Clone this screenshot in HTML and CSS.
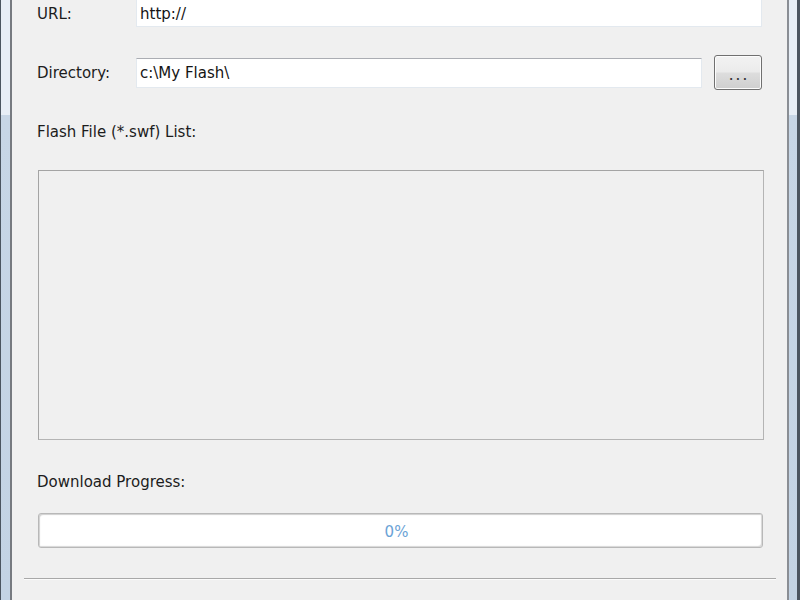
FILE: index.html
```html
<!DOCTYPE html>
<html>
<head>
    <meta charset="utf-8">
    <title>Flash Downloader</title>
    <link rel="stylesheet" href="styles.css">
</head>
<body>
    <div class="window">
        <div class="frame frame-left"></div>

        <div class="client">
            <div class="row row-url">
                <label class="label">URL:</label>
                <div class="field field-url">http://</div>
            </div>

            <div class="row row-dir">
                <label class="label">Directory:</label>
                <div class="field field-dir">c:\My Flash\</div>
                <button class="browse">...</button>
            </div>

            <div class="caption caption-list">Flash File (*.swf) List:</div>
            <div class="listbox"></div>

            <div class="caption caption-progress">Download Progress:</div>
            <div class="progress"><span class="progress-text">0%</span></div>

            <div class="separator"></div>
        </div>

        <div class="frame frame-right"></div>
    </div>
</body>
</html>
```

FILE: styles.css
```css
body {
    margin: 0;
    background: #f0f0f0;
    font-family: "DejaVu Sans", Verdana, sans-serif;
    font-size: 15px;
    color: #1c1c1c;
}
.window {
    display: flex;
    height: 600px;
    overflow: hidden;
}

/* window frame */
.frame {
    background: linear-gradient(to bottom, #e7eef6 0, #e7eef6 115px, #c7d6e6 115px, #c3d3e4 100%);
}
.frame-left {
    width: 9px;
    border-left: 1px solid #4b5560;
    border-right: 2px solid #767a80;
}
.frame-right {
    width: 8px;
    border-left: 2px solid #8a8e94;
    border-right: 3px solid #4b5560;
}

.client {
    flex: 1;
    padding: 0 25px;
    background: #f0f0f0;
}

/* rows */
.row {
    display: flex;
    align-items: center;
}
.label {
    width: 99px;
    flex: none;
    line-height: 18px;
}
.field {
    flex: 1;
    box-sizing: border-box;
    background: #fff;
    padding-left: 3px;
    line-height: 18px;
    display: flex;
    align-items: center;
    color: #141414;
}
.row-url {
    height: 27px;
}
.field-url {
    height: 27px;
    border: 1px solid #e3e9ef;
    border-top: none;
    padding-top: 1px;
}
.row-dir {
    margin-top: 28px;
    height: 35px;
}
.field-dir {
    height: 30px;
    margin-right: 12px;
    border: 1px solid #e3e9ef;
    border-top-color: #abadb3;
}
.browse {
    width: 48px;
    height: 35px;
    flex: none;
    box-sizing: border-box;
    border: 1px solid #707070;
    border-radius: 3px;
    background: linear-gradient(to bottom, #f2f2f2 0, #ebebeb 48%, #dddddd 52%, #cfcfcf 100%);
    box-shadow: inset 0 0 0 1px #fcfcfc;
    font-family: "DejaVu Sans", sans-serif;
    font-size: 10px;
    font-weight: bold;
    color: #3a3a3a;
    padding: 7px 0 0 3px;
    letter-spacing: 3px;
}

/* captions */
.caption {
    line-height: 18px;
}
.caption-list {
    margin-top: 33px;
}
.caption-progress {
    margin-top: 33px;
}

/* list box */
.listbox {
    margin: 29px -2px 0 1px;
    height: 270px;
    box-sizing: border-box;
    border: 1px solid #a4a4a4;
    border-right-color: #b4b4b4;
    border-bottom-color: #b4b4b4;
    background: #f0f0f0;
}

/* progress bar */
.progress {
    margin: 22px -1px 0 1px;
    height: 35px;
    box-sizing: border-box;
    border: 1px solid #b8b8b8;
    border-radius: 3px;
    background: #fff;
    box-shadow: inset 2px 2px 1px -1px #d0d0d0, inset -2px -2px 1px -1px #d6d6d6;
    display: flex;
    align-items: center;
    justify-content: center;
}
.progress-text {
    color: #6ba3d6;
    font-size: 15px;
    padding: 2px 8px 0 0;
}

.separator {
    margin: 30px -14px 0 -13px;
    border-top: 1px solid #a8a8a8;
    border-bottom: 1px solid #fbfbfb;
}
```
